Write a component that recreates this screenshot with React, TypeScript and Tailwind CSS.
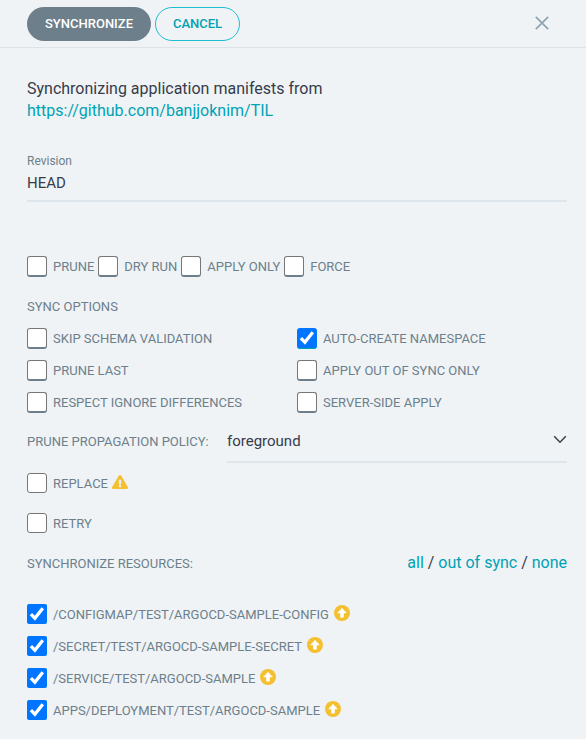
import { FaExclamationTriangle } from 'react-icons/fa';

type BoxProps = { checked?: boolean; raised?: boolean };

function Box({ checked = false, raised = false }: BoxProps) {
  if (checked) {
    return (
      <span
        className={
          raised
            ? 'block h-[21px] w-5 shrink-0 overflow-hidden rounded-[3px] border-b border-[#00a2b3] bg-[#0075ff]'
            : 'block h-5 w-5 shrink-0 overflow-hidden rounded-[2px] bg-[#0075ff]'
        }
      >
        <svg viewBox="0 0 20 20" className="block h-5 w-5" fill="none" stroke="#fff" strokeWidth="3.3">
          <path d="M3.9 10.2 7.9 14.2 15.8 4.2" />
        </svg>
      </span>
    );
  }
  return (
    <span
      className={
        raised
          ? 'block h-[21px] w-5 shrink-0 rounded-[3px] border border-b-2 border-[#767676] border-b-[#6d7f8b] bg-white'
          : 'block h-5 w-5 shrink-0 rounded-[3px] border border-[#767676] bg-white'
      }
    />
  );
}

function Option({ label, checked, raised }: BoxProps & { label: string }) {
  return (
    <label className="flex items-start gap-1.5">
      <Box checked={checked} raised={raised} />
      <span className="leading-[21px]">{label}</span>
    </label>
  );
}

function OutOfSyncIcon() {
  return (
    <svg viewBox="0 0 16 16" className="mt-[1px] ml-[5px] h-4 w-4 shrink-0">
      <circle cx="8" cy="8" r="8" fill="#f4c030" />
      <path d="M8 3.3 12.3 7.9H9.5V12.2H6.5V7.9H3.7Z" fill="#fff" stroke="#fff" strokeWidth=".6" strokeLinejoin="round" />
    </svg>
  );
}

const resources = [
  '/CONFIGMAP/TEST/ARGOCD-SAMPLE-CONFIG',
  '/SECRET/TEST/ARGOCD-SAMPLE-SECRET',
  '/SERVICE/TEST/ARGOCD-SAMPLE',
  'APPS/DEPLOYMENT/TEST/ARGOCD-SAMPLE',
];

export default function App() {
  return (
    <div className="h-[739px] w-[586px] overflow-hidden bg-[#eff3f6] font-[Roboto,sans-serif] text-[13px] whitespace-nowrap text-[#6d7f8b]">
      <header className="flex h-12 items-start justify-between border-b border-[#dee3e8] pt-[7px] pr-[37px] pl-[27px]">
        <div className="flex gap-1 text-[13px] font-medium">
          <button className="h-[34px] w-[124px] rounded-full bg-[#6d7f8b] text-white">SYNCHRONIZE</button>
          <button className="h-[34px] w-[85px] rounded-full border border-[#1fbdd0] text-[#00a2b3]">CANCEL</button>
        </div>
        <svg viewBox="0 0 14 14" className="mt-[9px] h-3.5 w-3.5" stroke="#8fa4b1" strokeWidth="1.7" fill="none">
          <path d="M.8.8 13.2 13.2M13.2.8.8 13.2" />
        </svg>
      </header>

      <main className="flex flex-col pr-[19px] pl-[27px]">
        <p className="mt-[30px] text-base leading-[22px] text-[#363c4a]">
          Synchronizing application manifests from
          <br />
          <a className="text-[#00a2b3]">https://github.com/banjjoknim/TIL</a>
        </p>

        <div className="mt-[31px] h-[49px] border-b-2 border-[#dee6eb]">
          <div className="text-[12px] leading-4">Revision</div>
          <div className="mt-1 text-[15px] leading-5 text-[#363c4a]">HEAD</div>
        </div>

        <div className="mt-[54px] flex h-[21px] gap-1">
          <Option label="PRUNE" raised />
          <Option label="DRY RUN" raised />
          <Option label="APPLY ONLY" raised />
          <Option label="FORCE" raised />
        </div>

        <div className="mt-5 leading-5">SYNC OPTIONS</div>

        <div className="mt-[11px] grid grid-cols-2 gap-y-[11px]">
          <Option label="SKIP SCHEMA VALIDATION" raised />
          <Option label="AUTO-CREATE NAMESPACE" checked raised />
          <Option label="PRUNE LAST" raised />
          <Option label="APPLY OUT OF SYNC ONLY" raised />
          <Option label="RESPECT IGNORE DIFFERENCES" raised />
          <Option label="SERVER-SIDE APPLY" raised />
        </div>

        <div className="mt-[17px] flex h-[33px]">
          <span className="w-[200px] leading-[23px]">PRUNE PROPAGATION POLICY:</span>
          <div className="flex flex-1 justify-between border-b-2 border-[#dee6eb] text-[15px] leading-[22px] text-[#363c4a]">
            <span>foreground</span>
            <svg viewBox="0 0 14 9" className="mt-[5px] h-[9px] w-3.5" fill="none" stroke="#363c4a" strokeWidth="1.4">
              <path d="M1.2 1.2 7 7.2 12.8 1.2" />
            </svg>
          </div>
        </div>

        <div className="mt-2.5 flex h-5 items-start">
          <Option label="REPLACE" />
          <FaExclamationTriangle className="mt-[1px] ml-1 h-4 w-4 text-[#f4c030]" />
        </div>
        <div className="mt-5 flex h-5">
          <Option label="RETRY" />
        </div>

        <div className="mt-5 flex h-5 items-start justify-between">
          <span className="leading-[21px]">SYNCHRONIZE RESOURCES:</span>
          <span className="text-base leading-5 text-[#363c4a]">
            <a className="text-[#00a2b3]">all</a> / <a className="text-[#00a2b3]">out of sync</a> /{' '}
            <a className="text-[#00a2b3]">none</a>
          </span>
        </div>

        <div className="mt-[31px] flex flex-col gap-3">
          {resources.map((name) => (
            <div key={name} className="flex h-5 items-start">
              <Option label={name} checked />
              <OutOfSyncIcon />
            </div>
          ))}
        </div>
      </main>
    </div>
  );
}
